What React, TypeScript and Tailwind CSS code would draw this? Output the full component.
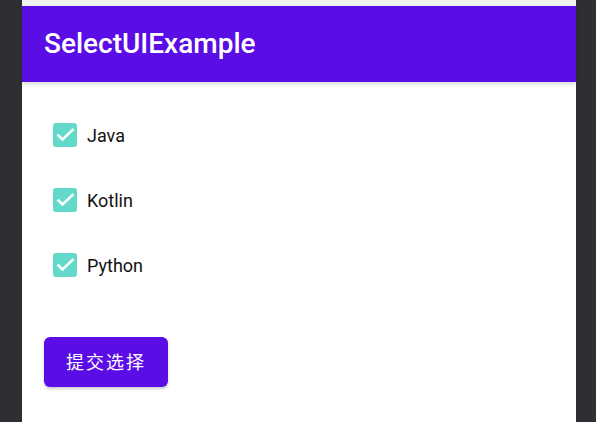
const items = ['Java', 'Kotlin', 'Python']

function CheckIcon() {
  return (
    <span className="w-[24px] h-[24px] rounded-[3px] bg-[#62d9c9] flex items-center justify-center shrink-0">
      <svg width="24" height="24" viewBox="0 0 24 24" fill="none">
        <path d="M5.5 12.5l4 4L19.5 7" stroke="white" strokeWidth="2.6" strokeLinecap="square" />
      </svg>
    </span>
  )
}

export default function App() {
  return (
    <div className="w-[596px] h-[422px] bg-[#2d2f33] flex overflow-hidden font-['Roboto','Noto_Sans_CJK_SC',sans-serif]">
      <div className="ml-[22px] w-[554px] h-full bg-white flex flex-col">
        <div className="h-[6px] bg-[#f2f2f2]" />
        {/* App bar */}
        <div className="h-[76px] bg-[#5b0de6] px-[22px] flex items-center shadow-[0_2px_4px_rgba(0,0,0,0.15)] z-10">
          <h1 className="text-[28px] font-medium text-white leading-none">SelectUIExample</h1>
        </div>

        <div className="pl-[31px] pt-[41px] flex flex-col gap-[41px]">
          {items.map((name) => (
            <label key={name} className="flex items-center gap-[10px] h-[24px]">
              <CheckIcon />
              <span className="text-[18px] text-[#111]">{name}</span>
            </label>
          ))}
        </div>

        <div className="pl-[22px] pt-[60px]">
          <button className="w-[124px] h-[50px] rounded-[6px] bg-[#5b0de6] text-white text-[18px] tracking-[2px] shadow-[0_2px_3px_rgba(0,0,0,0.2)] flex items-center justify-center">
            提交选择
          </button>
        </div>
      </div>
    </div>
  )
}
